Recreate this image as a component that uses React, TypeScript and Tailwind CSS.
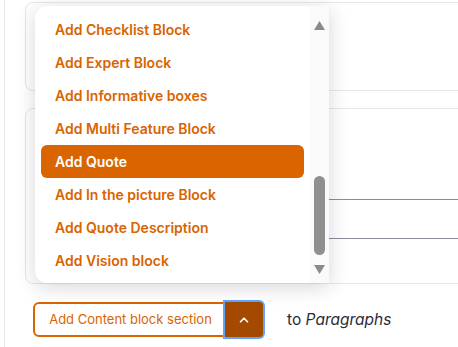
import { ChevronUp } from "lucide-react";

const blocks = [
  "Add Checklist Block",
  "Add Expert Block",
  "Add Informative boxes",
  "Add Multi Feature Block",
  "Add Quote",
  "Add In the picture Block",
  "Add Quote Description",
  "Add Vision block",
];

export default function App() {
  const active = "Add Quote";

  return (
    <div className="h-[347px] w-[458px] overflow-hidden bg-white pl-1 font-['Inter',sans-serif]">
      <div className="relative h-full border-l border-gray-200 pl-5 pt-0.5">
        {/* Cards behind the menu */}
        <div className="-mr-4 h-[89px] rounded-lg border border-gray-200 bg-white" />
        <div className="-mr-4 mt-[17px] flex h-[176px] flex-col rounded-lg border border-gray-200 bg-white pl-5 pt-[90px]">
          <div className="h-px bg-[#8b8b9c]" />
          <div className="mt-[38px] h-px bg-[#8b8b9c]" />
        </div>

        {/* Add block row */}
        <div className="mt-[18px] ml-2 flex items-center">
          <button className="h-[35px] w-[195px] rounded-l-md border-2 border-[#d96400] bg-white text-[13px] text-[#d96400]">
            Add Content block section
          </button>
          <button className="-ml-[3px] flex h-[35px] w-[38px] items-center justify-center rounded-r-sm bg-[#a34a00] ring-2 ring-[#60a5fa]">
            <ChevronUp size={14} strokeWidth={3} className="text-white" />
          </button>
          <span className="ml-6 text-[15.5px] text-[#2b2b33]">
            to <em>Paragraphs</em>
          </span>
        </div>

        {/* Dropdown menu */}
        <div className="absolute left-[30px] top-[6px] flex h-[277px] w-[294px] overflow-hidden rounded-l-xl bg-white shadow-[0_4px_20px_rgba(30,30,60,0.18)]">
          <ul className="flex-1 px-1.5 pt-[7px]">
            {blocks.map((b) => (
              <li
                key={b}
                className={
                  b === active
                    ? "flex h-[33px] items-center rounded-md bg-[#d96400] pl-[14px] text-[14px] font-semibold text-white"
                    : "flex h-[33px] items-center pl-[14px] text-[14px] font-semibold text-[#d96400]"
                }
              >
                {b}
              </li>
            ))}
          </ul>
          <div className="relative w-[19px] bg-[#fafafa]">
            <svg className="absolute left-[4px] top-[15px]" width="11" height="9" viewBox="0 0 11 9">
              <path d="M5.5 0 L11 9 L0 9 Z" fill="#8a8a8a" />
            </svg>
            <div className="absolute left-[4px] top-[170px] h-[79px] w-[11px] rounded-full bg-[#8f8f8f]" />
            <svg className="absolute left-[4px] top-[259px]" width="11" height="9" viewBox="0 0 11 9">
              <path d="M0 0 L11 0 L5.5 9 Z" fill="#8a8a8a" />
            </svg>
          </div>
        </div>
      </div>
    </div>
  );
}
